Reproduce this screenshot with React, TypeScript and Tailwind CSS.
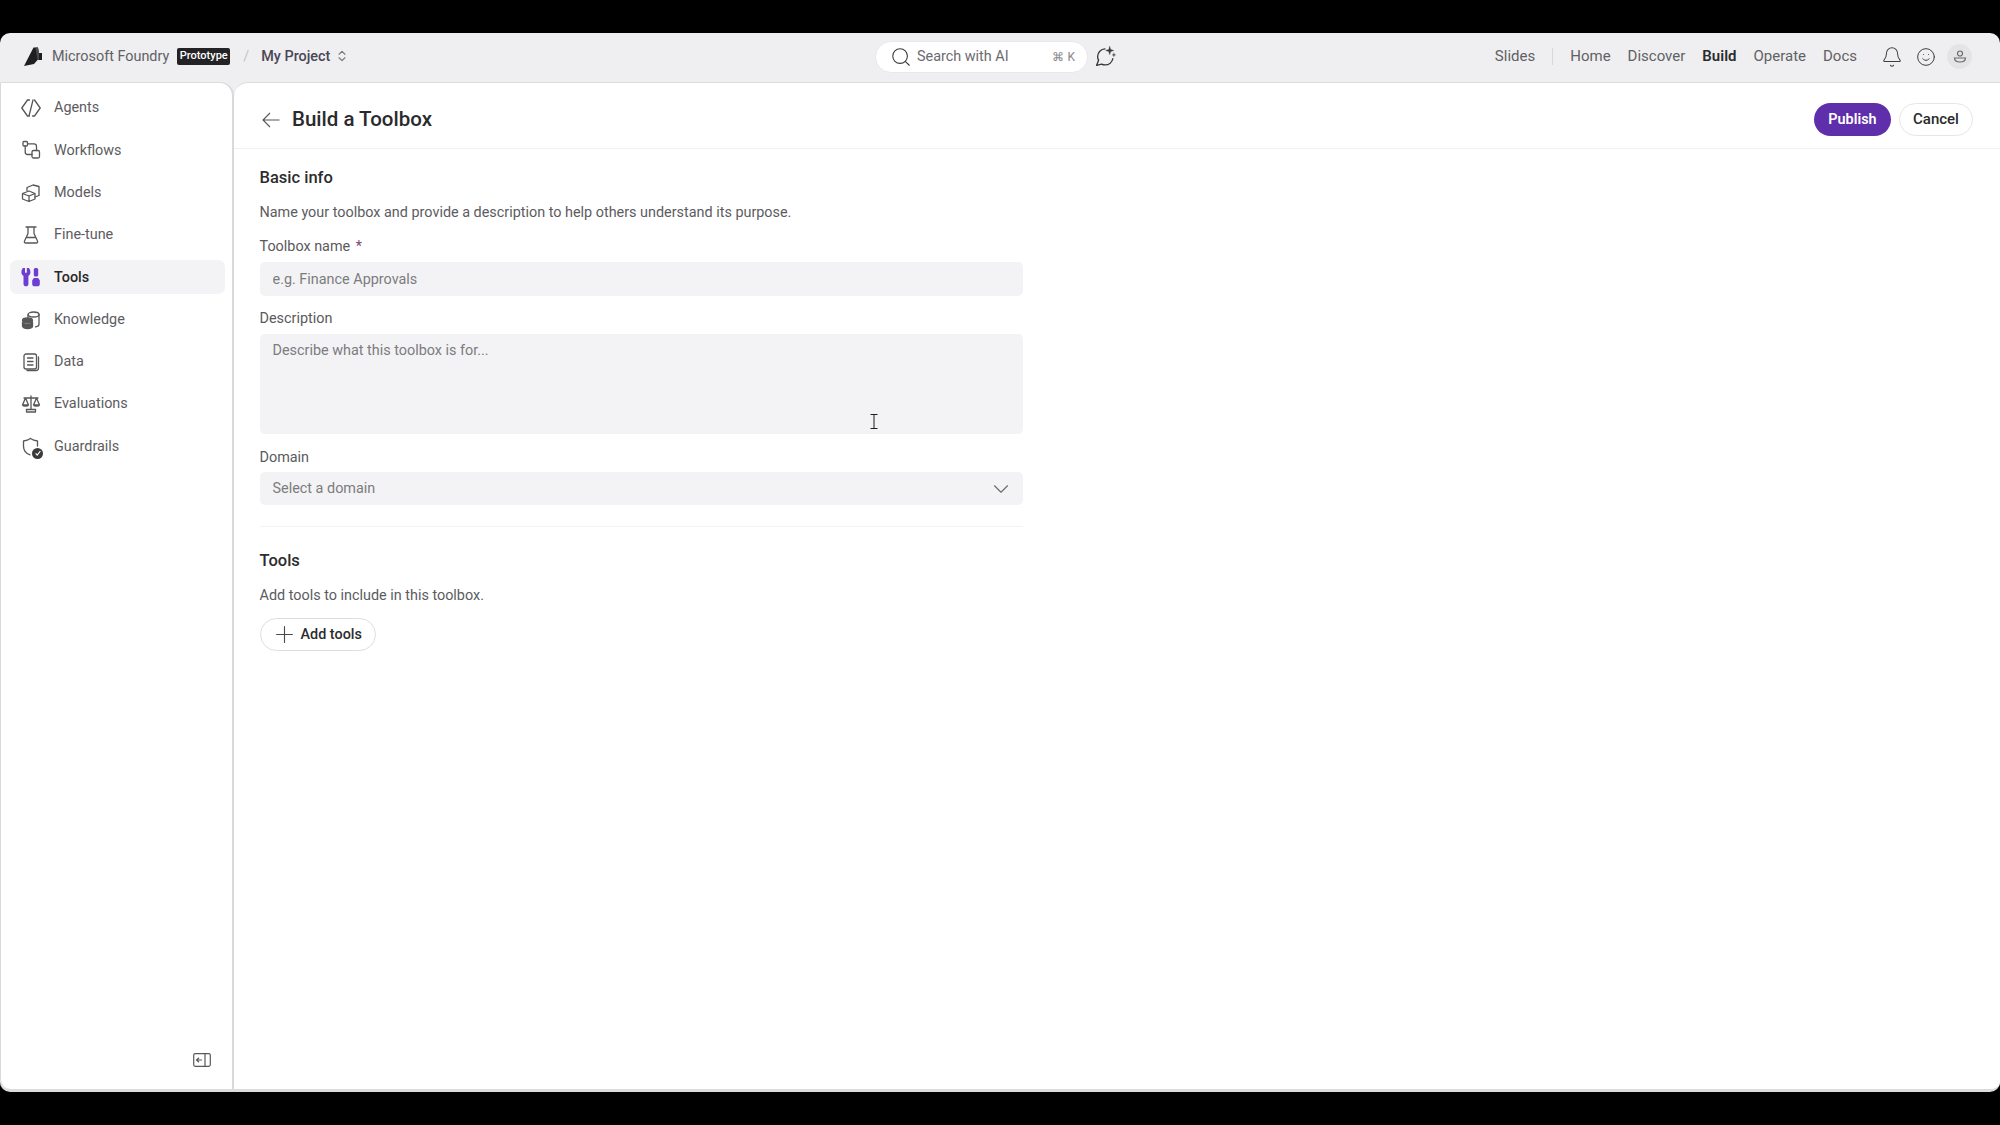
import { Bell, ChevronDown, ChevronsUpDown, Plus, Search, Smile } from 'lucide-react'
import type { ReactNode } from 'react'

const stroke = { fill: 'none', stroke: 'currentColor', strokeWidth: 1.3, strokeLinecap: 'round', strokeLinejoin: 'round' } as const

function Icon({ children, className = '' }: { children: ReactNode; className?: string }) {
  return (
    <svg viewBox="0 0 20 20" className={`w-5 h-5 shrink-0 ${className}`} {...stroke}>
      {children}
    </svg>
  )
}

const navItems: { label: string; active?: boolean; icon: ReactNode }[] = [
  {
    label: 'Agents',
    icon: (
      <Icon>
        <path d="M6.500 2 .8 10l5.700 8h2M13.500 2l5.700 8-5.700 8h-2M6.500 2h2M12 2 8 18" />
      </Icon>
    ),
  },
  {
    label: 'Workflows',
    icon: (
      <Icon>
        <rect x="2" y="1.500" width="4.500" height="4.500" rx="1" />
        <rect x="11" y="10.500" width="7.500" height="7.500" rx="1.500" />
        <path d="M6.500 3.800H13c1.500 0 2.500 1 2.500 2.500v4.200M4.200 6V12c0 1.500 1 2.500 2.500 2.500H11" />
      </Icon>
    ),
  },
  {
    label: 'Models',
    icon: (
      <Icon>
        <path d="M1.500 10.500 8 8l6 2.500v5.500L8 18.500 1.500 16zM1.500 10.500 8 13l6-2.500M8 13v5.500" />
        <path d="M6 7.500V4.500l6-2.500 6 1.500v9L14 14" />
      </Icon>
    ),
  },
  {
    label: 'Fine-tune',
    icon: (
      <Icon>
        <path d="M5 2h10M7 2v6.500L3.500 16c-.5 1 .2 2 1.200 2h10.600c1 0 1.700-1 1.200-2L13 8.500V2M5.500 12.500h9" />
      </Icon>
    ),
  },
  {
    label: 'Tools',
    active: true,
    icon: (
      <svg viewBox="0 0 20 20" className="w-5 h-5 shrink-0 text-[#6d3fd1]" fill="currentColor">
        <path d="M2 1h2v4.100c0 .5.4.9.9.9s.9-.4.9-.9V1h2c1 1 1.600 2.400 1.600 4.200 0 1.700-.8 3-2 3.800V17c0 1.400-1 2.300-2.300 2.300S2.500 18.400 2.500 17V9C1.200 8.200.4 6.900.4 5.200.4 3.400 1 2 2 1z" />
        <rect x="12.800" y="1" width="4.400" height="8.500" rx="1.500" />
        <path d="M12.800 11h4.400l1.600 2.500V17c0 1.400-1 2.300-2.300 2.300h-3c-1.300 0-2.300-.9-2.300-2.300v-3.500z" />
      </svg>
    ),
  },
  {
    label: 'Knowledge',
    icon: (
      <Icon>
        <ellipse cx="12.500" cy="4.500" rx="5.500" ry="2.500" />
        <path d="M7 5v3M18 4.500v10c0 1-1.200 2-3.500 2.300" />
        <ellipse cx="6.500" cy="10.500" rx="5" ry="2.500" fill="currentColor" />
        <path d="M1.500 12.500c1 1.400 2.800 2 5 2s4-.6 5-2V16c0 1.500-2.200 2.500-5 2.500s-5-1-5-2.500z" fill="currentColor" />
      </Icon>
    ),
  },
  {
    label: 'Data',
    icon: (
      <Icon>
        <rect x="3" y="2" width="12.500" height="15" rx="2" />
        <path d="M6.500 6h5.500M6.500 9.500h5.500M6.500 13h5.500M17.500 5v11c0 1.500-1 2.500-2.500 2.500H6" />
      </Icon>
    ),
  },
  {
    label: 'Evaluations',
    icon: (
      <Icon>
        <path d="M10 2v13M3 4h14M4.500 4 1.500 11c.5 1.500 5.500 1.500 6 0zM15.500 4l-3 7c.5 1.500 5.500 1.500 6 0zM1.500 11h6M12.500 11h6M5.500 15.500h9v2.500h-9z" />
      </Icon>
    ),
  },
  {
    label: 'Guardrails',
    icon: (
      <span className="relative block w-5 h-5 shrink-0">
        <Icon>
          <path d="M9.500 1.500c2 1.500 4.500 2.300 7 2.500v5M9 17.800C5 16.500 2.500 13.500 2.500 9V4c2.500-.2 5-1 7-2.500" />
        </Icon>
        <span className="absolute right-[-2px] bottom-[-2px] w-[11px] h-[11px] rounded-full bg-[#3a3a3c] text-white flex items-center justify-center">
          <svg viewBox="0 0 10 10" className="w-2 h-2" fill="none" stroke="currentColor" strokeWidth="1.500">
            <path d="m2 5.500 2 2 4-5" />
          </svg>
        </span>
      </span>
    ),
  },
]

const topLinks = ['Home', 'Discover', 'Build', 'Operate', 'Docs']

function Header() {
  return (
    <header className="h-[49px] shrink-0 flex items-center pb-[2px] text-[14.400px] text-[#616164]">
      <div className="w-[875px] shrink-0 flex items-center pl-6">
        <svg viewBox="0 0 18 19" className="w-[18px] h-[19px]">
          <path d="M0 19 9.500.5H14L15 6h3v7h-4.500L10 17z" fill="#1f1f21" />
          <path d="M14 .5 15 6v7h-1.500L11.500 .5z" fill="#4a4a4e" />
        </svg>
        <span className="ml-[10px]">Microsoft Foundry</span>
        <span className="ml-[8px] h-[17px] w-[53px] bg-[#232325] text-white text-[11px] font-medium flex items-center justify-center rounded-[2px]">Prototype</span>
        <span className="ml-[13px] text-[#c4c4c6]">/</span>
        <span className="ml-[12px] text-[#4a4656] font-medium">My Project</span>
        <ChevronsUpDown className="ml-[5px] w-[14px] h-[14px] text-[#77777a]" />
      </div>
      <div className="w-[213px] h-8 rounded-full bg-white border border-[#e8e8ea] flex items-center pl-[14px] pr-3">
        <Search className="w-[22px] h-[22px] text-[#3a3a3c]" strokeWidth={1.200} />
        <span className="ml-[5px] text-[#6b6b6e]">Search with AI</span>
        <span className="ml-auto text-[12px] text-[#88888b]">⌘ K</span>
      </div>
      <svg viewBox="0 0 20 20" className="ml-[7px] w-[21px] h-[21px] text-[#3a3a3c]" {...stroke}>
        <path d="M9.500 2.800A7.300 7.300 0 0 0 2.500 10c0 1.300.3 2.500.9 3.500L1.500 18.500l4.800-1.300c1 .5 2.200.8 3.400.8a7.500 7.500 0 0 0 7.300-6" />
        <path d="M14 .5l.9 2.900 2.900.9-2.900.9-.9 2.900-.9-2.900-2.900-.9 2.900-.9z" fill="currentColor" strokeWidth="0.400" />
        <path d="M18 6.800l.4 1.300 1.300.4-1.300.4-.4 1.300-.4-1.300-1.300-.4 1.300-.4z" fill="currentColor" strokeWidth="0.300" />
      </svg>
      <div className="ml-auto flex items-center pr-[28px] text-[15px]">
        <span>Slides</span>
        <span className="ml-[17px] mr-[17px] w-px h-[17px] bg-[#d8d8da]" />
        <nav className="flex items-center gap-[17px]">
          {topLinks.map((l) => (
            <span key={l} className={l === 'Build' ? 'font-semibold text-[#2b2b2d]' : ''}>
              {l}
            </span>
          ))}
        </nav>
        <Bell className="ml-[24px] w-[22px] h-[22px] text-[#3f3f41]" strokeWidth={1.100} />
        <Smile className="ml-[13px] w-[20px] h-[20px] text-[#3f3f41]" strokeWidth={1.200} />
        <span className="ml-[11px] w-[25px] h-[25px] rounded-full bg-[#e4e4e6] flex items-center justify-center text-[#6a6a6d]">
          <svg viewBox="0 0 16 16" className="w-4 h-4" fill="none" stroke="currentColor" strokeWidth="1.200">
            <circle cx="8" cy="4.500" r="2.500" />
            <path d="M2.500 9h11c0 2.500-2.500 4-5.500 4s-5.500-1.500-5.500-4z" />
          </svg>
        </span>
      </div>
    </header>
  )
}

function Sidebar() {
  return (
    <aside className="w-[234px] shrink-0 bg-white rounded-tr-[14px] rounded-bl-[10px] border-l border-t border-r-2 border-[#d9d9db] border-t-[#dcdcde] flex flex-col pl-[9px] pr-[7px] pt-[8px] pb-[22px]">
      <nav className="flex flex-col gap-2">
        {navItems.map((n) => (
          <a key={n.label} className={`h-[34.300px] rounded-[7px] flex items-center pl-[11px] gap-[13px] text-[14.400px] ${n.active ? 'bg-[#f3f3f5] text-[#28282a] font-medium' : 'text-[#5c5c5f]'}`}>
            <span className={n.active ? '' : 'text-[#57575a]'}>{n.icon}</span>
            {n.label}
          </a>
        ))}
      </nav>
      <svg viewBox="0 0 18 14" className="mt-auto ml-auto mr-[14px] w-[18px] h-[14px] text-[#58585b]" fill="none" stroke="currentColor" strokeWidth="1.200">
        <rect x=".7" y=".7" width="16.600" height="12.600" rx="1.500" />
        <path d="M12 1v12M9 7H3.500M6 4.700 3.500 7 6 9.300" />
      </svg>
    </aside>
  )
}

function Label({ children }: { children: ReactNode }) {
  return <label className="block text-[14.400px] leading-[20px] text-[#5a5a5d]">{children}</label>
}

function Main() {
  return (
    <main className="relative flex-1 bg-white rounded-tl-[14px] border-t border-[#dcdcde] flex flex-col">
      <div className="h-[66px] shrink-0 border-b border-[#f1f1f3] flex items-center pt-[8px] pl-[28px] pr-[27px]">
        <svg viewBox="0 0 18 16" className="w-[18px] h-4 text-[#55555a]" fill="none" stroke="currentColor" strokeWidth="1.100">
          <path d="M17.500 8H1M8 1 1 8l7 7" />
        </svg>
        <h1 className="ml-[12px] text-[20.500px] font-medium text-[#2a2a2c]">Build a Toolbox</h1>
        <button className="ml-auto w-[77px] h-[33px] rounded-full bg-[#5f2eaa] text-white text-[14.400px] font-semibold">Publish</button>
        <button className="ml-2 w-[74px] h-[33px] rounded-full bg-white border border-[#e6e6e8] text-[#2a2a2c] text-[15px] font-medium">Cancel</button>
      </div>
      <div className="w-[763.500px] ml-[25.500px] pt-[18px]">
        <h2 className="text-[16.500px] leading-[22px] font-medium text-[#2c2c2e]">Basic info</h2>
        <p className="mt-[14px] text-[14.400px] leading-[20px] text-[#5c5c5f]">Name your toolbox and provide a description to help others understand its purpose.</p>
        <div className="mt-[14px]">
          <Label>
            Toolbox name <span className="ml-[2px] text-[#7a4a6a]">*</span>
          </Label>
          <input readOnly placeholder="e.g. Finance Approvals" className="mt-[5px] block w-full h-[34px] rounded-[5px] bg-[#f3f3f5] px-[13px] text-[14.400px] outline-none placeholder:text-[#7c7c7f]" />
        </div>
        <div className="mt-[13px]">
          <Label>Description</Label>
          <textarea readOnly placeholder="Describe what this toolbox is for..." className="mt-[5px] block w-full h-[100px] rounded-[5px] bg-[#f3f3f5] px-[13px] py-[7px] text-[14.400px] leading-[20px] outline-none resize-none placeholder:text-[#7c7c7f]" />
        </div>
        <div className="mt-[14px]">
          <Label>Domain</Label>
          <div className="mt-[4px] h-[33px] rounded-[5px] bg-[#f3f3f5] flex items-center pl-[13px] pr-[9px] text-[14.400px] text-[#7c7c7f]">
            <span className="pt-[1px]">Select a domain</span>
            <ChevronDown className="ml-auto w-[26px] h-[26px] text-[#6a6a6d]" strokeWidth={1} />
          </div>
        </div>
        <div className="mt-[21px] border-t border-[#f3f3f5]" />
        <h2 className="mt-[23px] text-[16.500px] leading-[22px] font-medium text-[#2c2c2e]">Tools</h2>
        <p className="mt-[14px] text-[14.400px] leading-[20px] text-[#5c5c5f]">Add tools to include in this toolbox.</p>
        <button className="mt-[12px] h-[33px] w-[116px] rounded-full border border-[#dedee0] bg-white flex items-center pl-[10px] text-[14.400px] font-medium text-[#2c2c2e]">
          <Plus className="w-[27px] h-[27px] text-[#4a4a4d]" strokeWidth={1} />
          <span className="ml-[3px]">Add tools</span>
        </button>
      </div>
      <svg viewBox="0 0 8 15" className="absolute left-[636px] top-[331px] w-2 h-[15px] text-[#1f1f21]" fill="none" stroke="currentColor" strokeWidth="1">
        <path d="M.5.500h7M4 .5v14M.5 14.500h7" />
      </svg>
    </main>
  )
}

export default function App() {
  return (
    <div className="h-[1125px] bg-black py-[33px] font-['Roboto',sans-serif]">
      <div className="h-[1059px] rounded-[10px] bg-[#efeff1] flex flex-col overflow-hidden border-b-[3px] border-[#dcdcde]">
        <Header />
        <div className="flex-1 min-h-0 flex">
          <Sidebar />
          <Main />
        </div>
      </div>
    </div>
  )
}
